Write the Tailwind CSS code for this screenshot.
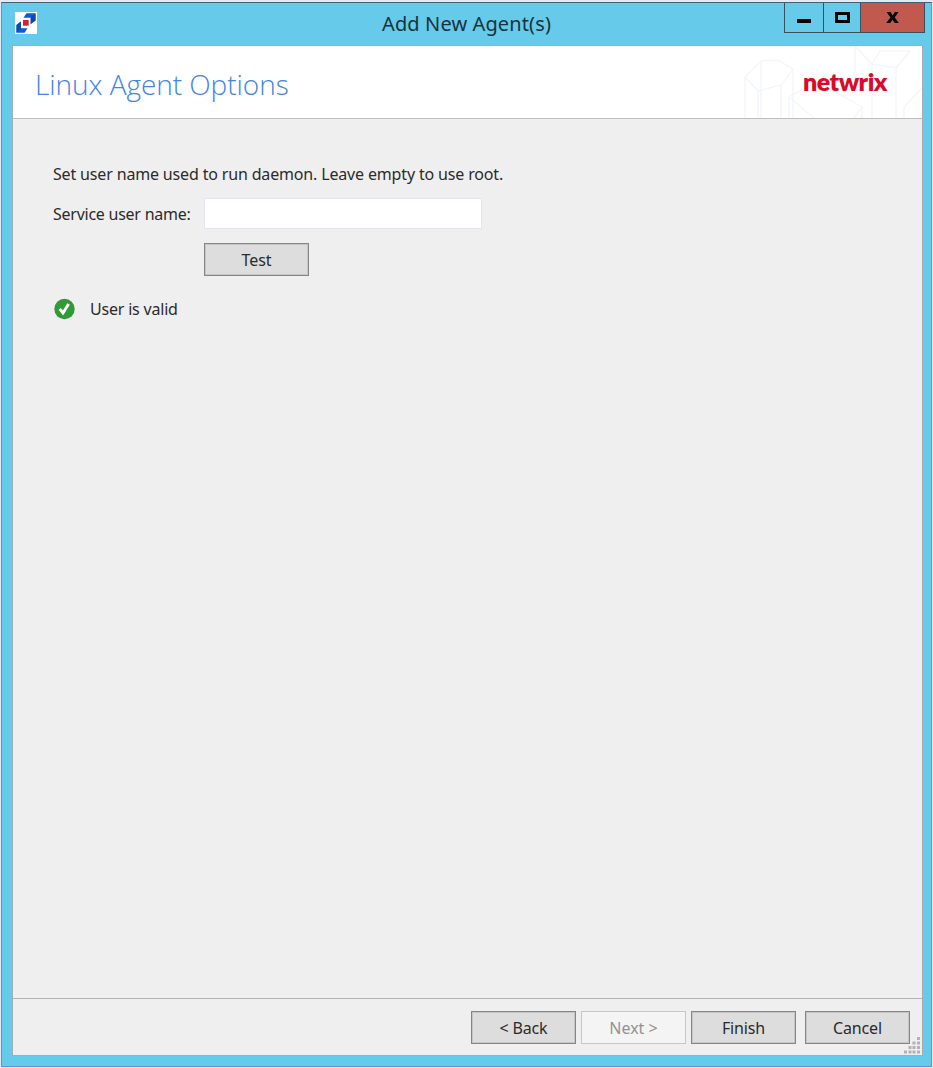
<!DOCTYPE html>
<html lang="en">
<head>
<meta charset="utf-8">
<title>Add New Agent(s)</title>
<script src="https://cdn.jsdelivr.net/npm/@tailwindcss/browser@4"></script>
</head>
<body class="w-[933px] h-[1068px] overflow-hidden bg-[#e3e9f6] pt-[2px] pl-px font-['Noto_Sans','Open_Sans',sans-serif] text-[#2b2b2b]">
<div class="flex flex-col w-[931px] h-[1065px] bg-[#66caea] border border-t-[#47606f] border-l-[#6b90c4] border-r-[#6b90d8] border-b-[#6b90d8]">
  <header class="relative flex h-[42px] shrink-0 items-start">
    <svg class="ml-[13px] mt-[9px] h-[22px] w-[22px] shrink-0" viewBox="0 0 22 22">
      <rect width="22" height="22" fill="#fff"/>
      <path d="M11.500 1.300H20.500V8.500L15.700 12V5.700H8.500Z" fill="#0b5ad2"/>
      <path d="M20.500 1.300V8.500L15.700 12V5.700Z" fill="#0a49b4"/>
      <path d="M5.800 9.500L1.500 13V20.700H9.500L12.500 16.200H5.800Z" fill="#0b5ad2"/>
      <path d="M5.800 9.500L1.500 13V20.700L5.800 16.200Z" fill="#0a49b4"/>
      <rect x="8" y="8" width="5.700" height="5.700" fill="#dc2031"/>
    </svg>
    <h1 class="flex-1 pl-[345px] pt-[6px] text-[20px] leading-[30px] whitespace-nowrap text-[#17343d]"><span class="tracking-[0.12px]">Add New Agent(s)</span></h1>
    <div class="mr-[6px] flex h-[30px] w-[141px] shrink-0 border border-t-0 border-[#36525e]">
      <button class="flex w-[39px] items-center justify-center border-r border-[#36525e]"><svg class="h-[28px] w-[20px]" viewBox="0 0 20 28"><rect x="3" y="15" width="14" height="4" fill="#000"/></svg></button>
      <button class="flex w-[37px] items-center justify-center border-r border-[#36525e]"><svg class="h-[28px] w-[20px]" viewBox="0 0 20 28"><rect x="4.500" y="9.500" width="12" height="8" fill="none" stroke="#000" stroke-width="3"/></svg></button>
      <button class="flex flex-1 items-center justify-center bg-[#c1594f]"><svg class="h-[28px] w-[20px]" viewBox="0 0 20 28"><path d="M3.500 8H7.500L9.700 11.500L11.900 8H15.500L11.700 13.500L15.800 19H11.800L9.500 15.700L7.200 19H3.200L7.500 13.500Z" fill="#000"/></svg></button>
    </div>
  </header>
  <main class="ml-[10px] flex h-[1011px] w-[911px] flex-col border border-[#a5adb0] bg-[#efefef]">
    <section class="relative flex h-[73px] shrink-0 border-b border-[#bdbdbd] bg-white">
      <svg class="absolute right-0 top-0 h-[72px] w-[190px]" viewBox="0 0 190 72" fill="none" stroke="#f0f4fc" stroke-width="1.200">
        <path d="M13 72V31L29 15L46 14L61 23V72M13 31L26 45L49 39L61 23M26 45V72M49 39V72M29 15V72M57 72V51L80 38M57 51L82 72M75 41H95L130 61V72M122 72L130 61M123 0V33M123 0L140 18V72M140 18L148 5H178L164 22L140 18M164 22V72M172 72V61L190 42"/>
      </svg>
      <h2 class="pl-[22px] pt-[17px] font-['Open_Sans',sans-serif] text-[28px] font-light leading-[42px] whitespace-nowrap text-[#4285e2]"><span class="tracking-[-0.05px]">Linux Agent Options</span></h2>
      <div class="relative ml-auto w-[119px] pt-[18px] font-['Lato',sans-serif] text-[25px] font-extrabold leading-[34px] text-[#d80b2c]"><span class="tracking-[-0.5px]">netwrix</span></div>
    </section>
    <section class="flex flex-1 flex-col pl-[40px] text-[16px]">
      <p class="mt-[43px] h-[24px] leading-[24px] whitespace-nowrap"><span class="tracking-[-0.16px]">Set user name used to run daemon. Leave empty to use root.</span></p>
      <div class="mt-[12px] flex h-[31px] items-center">
        <label for="user" class="w-[151px] leading-[24px] whitespace-nowrap"><span class="tracking-[-0.25px]">Service user name:</span></label>
        <input id="user" class="h-[31px] w-[278px] border border-[#e4e6ef] bg-white">
      </div>
      <button class="ml-[151px] mt-[14px] h-[33px] w-[105px] border border-[#858585] bg-[#dddddd] leading-[24px] shadow-[inset_0_0_0_1px_#c6c6c6]"><span class="tracking-[-0.1px]">Test</span></button>
      <div class="mt-[21px] flex h-[24px] items-center">
        <svg class="h-[22px] w-[22px]" viewBox="0 0 22 22"><circle cx="11.500" cy="11" r="10.200" fill="#309a36"/><path d="M6.700 10.800L10 15L15.600 6" fill="none" stroke="#fff" stroke-width="2.900"/></svg>
        <p class="ml-[15px] leading-[24px] whitespace-nowrap"><span class="tracking-[-0.2px]">User is valid</span></p>
      </div>
    </section>
    <footer class="relative flex h-[57px] shrink-0 border-t border-[#b3b3b3] pl-[458px] pt-[12px] text-[16px]">
      <button class="h-[33px] w-[105px] border border-[#858585] bg-[#dddddd] leading-[24px] shadow-[inset_0_0_0_1px_#c6c6c6]"><span class="tracking-[-0.15px]">&lt; Back</span></button>
      <button class="ml-[5px] h-[33px] w-[105px] border border-[#c3c9cb] bg-[#f4f4f4] leading-[24px] text-[#929292]"><span class="tracking-[0px]">Next &gt;</span></button>
      <button class="ml-[5px] h-[33px] w-[105px] border border-[#858585] bg-[#dddddd] leading-[24px] shadow-[inset_0_0_0_1px_#c6c6c6]"><span class="tracking-[-0.15px]">Finish</span></button>
      <button class="ml-[9px] h-[33px] w-[105px] border border-[#858585] bg-[#dddddd] leading-[24px] shadow-[inset_0_0_0_1px_#c6c6c6]"><span class="tracking-[-0.15px]">Cancel</span></button>
      <svg class="absolute bottom-0 right-0 h-[18px] w-[18px]" viewBox="0 0 18 18" fill="#b2b2b2"><path d="M13 0h3v3h-3zM8.500 4.500h3v3h-3zM13 4.500h3v3h-3zM4.500 9h3v3h-3zM8.500 9h3v3h-3zM13 9h3v3h-3zM0 13.500h3v3h-3zM4.500 13.500h3v3h-3zM8.500 13.500h3v3h-3zM13 13.500h3v3h-3z"/></svg>
    </footer>
  </main>
</div>
</body>
</html>
